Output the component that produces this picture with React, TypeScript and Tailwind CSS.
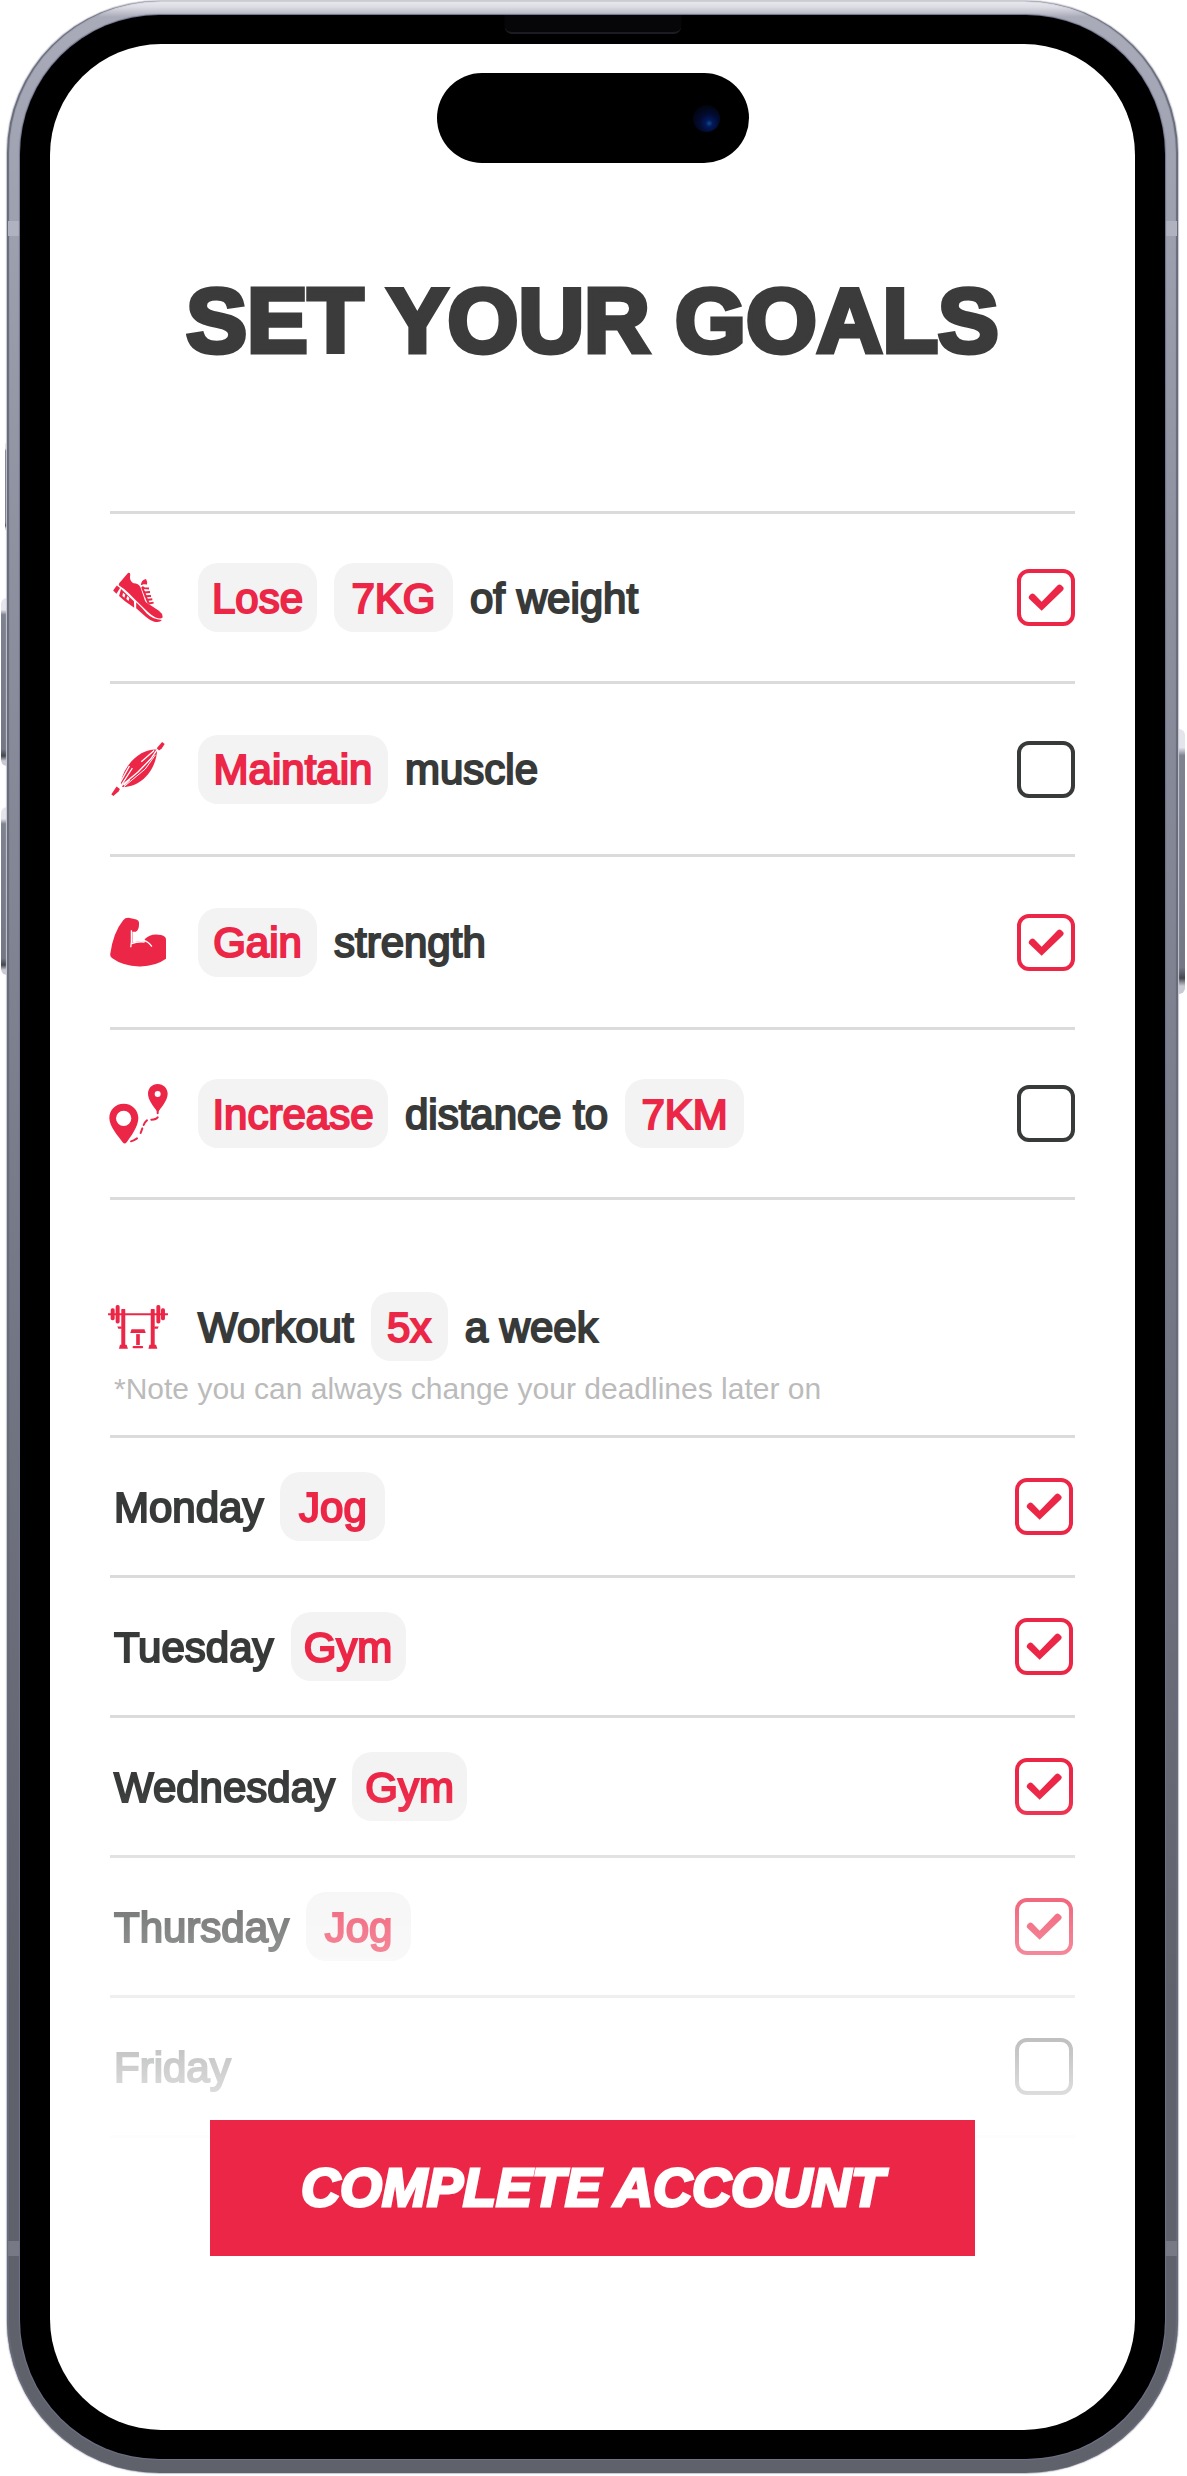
import { Fragment, type ReactNode } from "react";

type Part = { text: string; chip?: string };

const SHORT = "w-[119px]";
const LONG = "w-[190px]";

function ShoeIcon() {
  return (
    <svg viewBox="35 30 151 155" className="h-[51px] w-[50px]" fill="currentColor" aria-hidden="true">
      <path d="M80 33Q87 31 87 38Q83 58 97 64Q112 64 118 76L132 118Q136 126 150 132L174 148Q187 158 185 168Q180 174 164 168Q152 163 140 151L106 118L82 94Q68 80 53 71Q50 66 58 59Z" />
      <path d="M46 71L35 86L45 96L56 79Z" />
      <path fillRule="evenodd" d="M59 82L98 119L99 139L71 119L53 103ZM65 93L63 103L69 108L72 99ZM78 103L75 112L82 118L84 109Z" />
      <path d="M105 122Q122 138 137 156Q154 173 183 176Q178 184 160 181Q146 177 134 166L105 140Z" />
      <path d="M119 70Q120 54 135 51Q139 58 138 68L128 67Z" />
      <path d="M123 75L129 79L144 80M128 92L147 91M131 104L150 103M137 115L154 113M143 126L158 123" fill="none" stroke="currentColor" strokeWidth="6" />
      <path d="M123 76L143 126" stroke="currentColor" strokeWidth="6" />
    </svg>
  );
}

function MuscleIcon() {
  return (
    <svg viewBox="22 527 162 164" className="h-[54px] w-[54px]" fill="currentColor" aria-hidden="true">
      <path d="M176 527L184 533L175 547L167 553L160 546Z" />
      <path d="M38 662L48 670L44 677L28 691L22 686Z" />
      <path d="M160 550C112 548 64 590 50 650L56 664C112 664 158 612 161 552Z" />
      <path d="M48 652L77 600M53 657L86 606M78 642L60 658M113 587L152 553" stroke="white" strokeWidth="4" fill="none" />
      <path d="M50 662L103 618L142 578L161 550" stroke="white" strokeWidth="4" fill="none" />
      <path d="M60 663L125 609L156 566" stroke="white" strokeWidth="3" fill="none" />
    </svg>
  );
}

function ArmIcon() {
  return (
    <svg viewBox="14 1064 170 150" className="h-[50px] w-[56px]" fill="currentColor" aria-hidden="true">
      <path d="M15 1174Q24 1110 54 1073Q61 1064 74 1066L94 1071Q103 1074 102 1082Q103 1103 92 1108H82V1141Q103 1134 121 1137L119 1131Q138 1111 169 1118Q184 1121 184 1132V1190Q151 1214 103 1213Q52 1211 21 1188Q13 1183 15 1174Z" />
      <path d="M79 1103V1138L77 1155M80 1144Q98 1136 119 1139M117 1134Q132 1139 141 1153" fill="none" stroke="white" strokeWidth="4" />
    </svg>
  );
}

function RouteIcon() {
  return (
    <svg viewBox="14 25 177 180" className="h-[60px] w-[59px]" fill="currentColor" aria-hidden="true">
      <path fillRule="evenodd" d="M58 84C33 84 15 103 15 127C15 153 43 183 55 200Q61 207 67 200C79 183 102 153 102 127C102 103 83 84 58 84ZM58 105A23 23 0 1 1 58 151A23 23 0 1 1 58 105Z" />
      <path fillRule="evenodd" d="M160 25C143 25 131 38 131 54C131 72 148 93 157 105Q160 110 164 105C173 93 190 72 190 54C190 38 177 25 160 25ZM160 46A9 9 0 1 1 160 64A9 9 0 1 1 160 46Z" />
      <path d="M160 102V113M160 125Q156 131 141 132M128 134Q121 140 118 148M114 158L109 172M98 188Q90 194 80 197" fill="none" stroke="currentColor" strokeWidth="6" strokeLinecap="round" />
    </svg>
  );
}

function BenchIcon() {
  return (
    <svg viewBox="14 687 181 133" className="h-11 w-[60px]" fill="currentColor" aria-hidden="true">
      <rect x="14" y="712" width="181" height="6" />
      <rect x="22" y="697" width="12" height="36" rx="5" />
      <rect x="37" y="687" width="12" height="56" rx="5" />
      <rect x="160" y="687" width="12" height="56" rx="5" />
      <rect x="174" y="697" width="12" height="36" rx="5" />
      <rect x="54" y="699" width="12" height="110" rx="2" />
      <rect x="143" y="699" width="12" height="110" rx="2" />
      <path d="M50 807H70L74 819H47ZM139 807H159L163 819H136Z" />
      <path d="M42 752H55V759H45ZM154 752H167L164 759H154Z" />
      <path d="M85 760H124L128 772H81Z" />
      <rect x="99" y="775" width="11" height="33" />
      <rect x="88" y="811" width="32" height="7" rx="3" />
    </svg>
  );
}

function Check({ label, checked }: { label: string; checked: boolean }) {
  return (
    <span className="relative block h-[57px] w-[58px] shrink-0">
      <input
        type="checkbox"
        aria-label={label}
        defaultChecked={checked}
        className="peer block size-full appearance-none rounded-xl border-4 border-[#383a3a] bg-white checked:border-[#ec2646]"
      />
      <svg
        viewBox="0 0 174 171"
        className="pointer-events-none absolute inset-0 hidden size-full text-[#ec2646] peer-checked:block"
        fill="currentColor"
        aria-hidden="true"
      >
        <path d="M35 85Q35 80 42 75Q47 72 52 76L74 98L122 49Q127 44 132 48L139 55Q142 59 138 64L74 125L37 90Q35 88 35 85Z" />
      </svg>
    </span>
  );
}

function Phrase({ parts }: { parts: Part[] }) {
  return (
    <div className="flex items-center gap-[17px] whitespace-nowrap text-[42px] leading-[50px] [-webkit-text-stroke:2px_currentColor]">
      {parts.map((part) => (
        <Fragment key={part.text}>
          {part.chip ? (
            <button
              type="button"
              className={`flex h-[69px] items-center justify-center rounded-[20px] bg-[#f3f3f3] pt-0.5 text-[#ec2646] ${part.chip}`}
            >
              {part.text}
            </button>
          ) : (
            <span className="pt-0.5">{part.text}</span>
          )}
        </Fragment>
      ))}
    </div>
  );
}

function IconSlot({ children }: { children: ReactNode }) {
  return <span className="mr-[30px] -ml-0.5 flex w-[60px] shrink-0 justify-center text-[#ec2646]">{children}</span>;
}

const goals = [
  {
    label: "Lose 7KG of weight",
    icon: <ShoeIcon />,
    checked: true,
    height: "h-[170px]",
    parts: [{ text: "Lose", chip: SHORT }, { text: "7KG", chip: SHORT }, { text: "of weight" }],
  },
  {
    label: "Maintain muscle",
    icon: <MuscleIcon />,
    checked: false,
    height: "h-[173px]",
    parts: [{ text: "Maintain", chip: LONG }, { text: "muscle" }],
  },
  {
    label: "Gain strength",
    icon: <ArmIcon />,
    checked: true,
    height: "h-[173px]",
    parts: [{ text: "Gain", chip: SHORT }, { text: "strength" }],
  },
  {
    label: "Increase distance to 7KM",
    icon: <RouteIcon />,
    checked: false,
    height: "h-[170px]",
    parts: [{ text: "Increase", chip: LONG }, { text: "distance to" }, { text: "7KM", chip: SHORT }],
  },
];

const days = [
  { day: "Monday", parts: [{ text: "Monday" }, { text: "Jog", chip: "w-[105px]" }], checked: true },
  { day: "Tuesday", parts: [{ text: "Tuesday" }, { text: "Gym", chip: "w-[115px]" }], checked: true },
  { day: "Wednesday", parts: [{ text: "Wednesday" }, { text: "Gym", chip: "w-[115px]" }], checked: true },
  { day: "Thursday", parts: [{ text: "Thursday" }, { text: "Jog", chip: "w-[105px]" }], checked: true },
  { day: "Friday", parts: [{ text: "Friday" }], checked: false },
];

function SideKey({ className }: { className: string }) {
  return (
    <span
      className={`absolute bg-[linear-gradient(to_bottom,#e4e4ec_0%,#e4e4ec_7%,#7f8391_10%,#747886_90%,#44464e_94%,#c9c9d3_97%)] ${className}`}
    />
  );
}

function Band({ className }: { className: string }) {
  return <span className={`absolute h-[15px] w-[12px] ${className}`} />;
}

export default function App() {
  return (
    <div className="bg-white pt-px pr-[9px] pb-0.5 pl-[7px] font-['Liberation_Sans',Arial,sans-serif] text-[#383a3a]">
      <div className="relative">
        <SideKey className="top-[441px] -left-[2px] h-[89px] w-[3px] rounded-l-sm" />
        <SideKey className="top-[597px] -left-[6px] h-[168px] w-[7px] rounded-l-md" />
        <SideKey className="top-[806px] -left-[6px] h-[168px] w-[7px] rounded-l-md" />
        <SideKey className="top-[728px] -right-[7px] h-[265px] w-[7px] rounded-r-md" />

        <div className="relative rounded-[152px] bg-[linear-gradient(to_bottom,#e9e9ef_0px,#dcdce4_6px,#a9abb9_16px,#a0a3b2_160px,#8f92a1_520px,#747785_1300px,#5f626b_2000px,#5f626b_100%)] px-[13px] py-[14px] shadow-[inset_2px_0_1px_#686b79,inset_-2px_0_1px_#686b79,0_0_1px_1px_#c6c6d0]">
          <Band className="top-[220px] left-px bg-[#b0b2bf]" />
          <Band className="top-[220px] right-px bg-[#b0b2bf]" />
          <Band className="bottom-[217px] left-px bg-[#777985]" />
          <Band className="bottom-[217px] right-px bg-[#777985]" />

          <div className="relative rounded-[139px] bg-black px-[30px] py-[29px] shadow-[0_0_1px_1px_#70738a]">
            <span className="absolute top-0 left-1/2 h-[19px] w-[177px] -translate-x-1/2 rounded-b-lg border-b-2 border-[#1b1c22] bg-[#060608]" />

            <main className="flow-root rounded-[111px] bg-white px-[60px] pb-[174px]">
              <div className="mx-auto mt-[29px] flex h-[90px] w-[312px] items-center justify-end rounded-full bg-black pr-[29px]">
                <span className="size-[27px] rounded-full bg-[radial-gradient(circle_at_60%_68%,#0b4f86_0%,#03195c_14%,#020c32_38%,#020617_65%,#000_100%)]" />
              </div>

              <h1 className="mt-[113px] text-center text-[91px] leading-[90px] font-bold whitespace-nowrap text-[#3b3b3b] [-webkit-text-stroke:5px_currentColor]">
                SET YOUR GOALS
              </h1>

              <ul className="mt-[145px] border-t-[3px] border-[#dbdbdb]">
                {goals.map((goal) => (
                  <li
                    key={goal.label}
                    className={`flex items-center justify-between border-b-[3px] border-[#dbdbdb] ${goal.height}`}
                  >
                    <div className="flex items-center">
                      <IconSlot>{goal.icon}</IconSlot>
                      <Phrase parts={goal.parts} />
                    </div>
                    <Check label={goal.label} checked={goal.checked} />
                  </li>
                ))}
              </ul>

              <section className="mt-[92px]">
                <div className="flex items-center">
                  <IconSlot>
                    <BenchIcon />
                  </IconSlot>
                  <Phrase parts={[{ text: "Workout" }, { text: "5x", chip: "w-[77px]" }, { text: "a week" }]} />
                </div>
                <p className="mt-[10px] mb-[28px] ml-1 text-[30px] leading-9 whitespace-nowrap text-[#bbbbbb]">
                  *Note you can always change your deadlines later on
                </p>

                <ul className="border-t-[3px] border-[#dbdbdb] [mask-image:linear-gradient(to_bottom,black_50%,transparent_103%)]">
                  {days.map((item) => (
                    <li
                      key={item.day}
                      className="flex h-[140px] items-center justify-between border-b-[3px] border-[#dbdbdb] pr-0.5 pl-1"
                    >
                      <Phrase parts={item.parts} />
                      <Check label={item.day} checked={item.checked} />
                    </li>
                  ))}
                </ul>
              </section>

              <div className="relative -mt-[18px] px-[100px]">
                <button
                  type="button"
                  className="h-[136px] w-full bg-[#ec2646] pb-0.5 text-[54px] leading-none font-bold whitespace-nowrap text-white italic [-webkit-text-stroke:3px_currentColor]"
                >
                  COMPLETE ACCOUNT
                </button>
              </div>
            </main>
          </div>
        </div>
      </div>
    </div>
  );
}
